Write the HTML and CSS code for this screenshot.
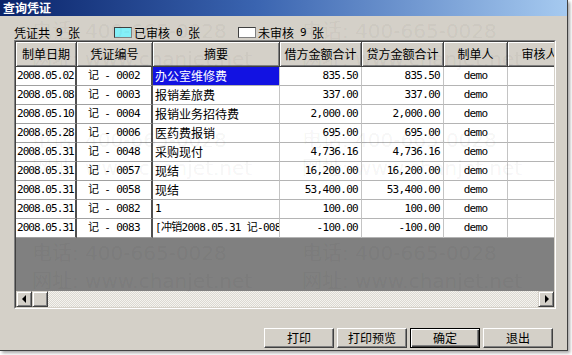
FILE: index.html
```html
<!DOCTYPE html>
<html lang="zh">
<head>
<meta charset="utf-8">
<title>查询凭证</title>
<link rel="stylesheet" href="styles.css">
</head>
<body>
<div class="win">
  <div class="titlebar">查询凭证</div>
  <div class="content">
    <div class="info">
      <span class="count">凭证共<span class="n">9</span>张</span>
      <span class="legend"><i class="sw sw-cyan"></i>已审核<span class="n">0</span>张</span>
      <span class="legend"><i class="sw sw-white"></i>未审核<span class="n">9</span>张</span>
    </div>
    <div class="grid">
      <div class="grid-in">
        <div class="row hrow">
          <div class="hc">制单日期</div>
          <div class="hc">凭证编号</div>
          <div class="hc">摘要</div>
          <div class="hc">借方金额合计</div>
          <div class="hc">贷方金额合计</div>
          <div class="hc">制单人</div>
          <div class="hc">审核人</div>
        </div>
        <div class="row drow">
          <div class="c fix mono date">2008.05.02</div><div class="c fix mono ctr">记 - 0002</div><div class="c txt sel">办公室维修费</div><div class="c mono num">835.50</div><div class="c mono num">835.50</div><div class="c mono ctr">demo</div><div class="c"></div>
        </div>
        <div class="row drow">
          <div class="c fix mono date">2008.05.08</div><div class="c fix mono ctr">记 - 0003</div><div class="c txt">报销差旅费</div><div class="c mono num">337.00</div><div class="c mono num">337.00</div><div class="c mono ctr">demo</div><div class="c"></div>
        </div>
        <div class="row drow">
          <div class="c fix mono date">2008.05.10</div><div class="c fix mono ctr">记 - 0004</div><div class="c txt">报销业务招待费</div><div class="c mono num">2,000.00</div><div class="c mono num">2,000.00</div><div class="c mono ctr">demo</div><div class="c"></div>
        </div>
        <div class="row drow">
          <div class="c fix mono date">2008.05.28</div><div class="c fix mono ctr">记 - 0006</div><div class="c txt">医药费报销</div><div class="c mono num">695.00</div><div class="c mono num">695.00</div><div class="c mono ctr">demo</div><div class="c"></div>
        </div>
        <div class="row drow">
          <div class="c fix mono date">2008.05.31</div><div class="c fix mono ctr">记 - 0048</div><div class="c txt">采购现付</div><div class="c mono num">4,736.16</div><div class="c mono num">4,736.16</div><div class="c mono ctr">demo</div><div class="c"></div>
        </div>
        <div class="row drow">
          <div class="c fix mono date">2008.05.31</div><div class="c fix mono ctr">记 - 0057</div><div class="c txt">现结</div><div class="c mono num">16,200.00</div><div class="c mono num">16,200.00</div><div class="c mono ctr">demo</div><div class="c"></div>
        </div>
        <div class="row drow">
          <div class="c fix mono date">2008.05.31</div><div class="c fix mono ctr">记 - 0058</div><div class="c txt">现结</div><div class="c mono num">53,400.00</div><div class="c mono num">53,400.00</div><div class="c mono ctr">demo</div><div class="c"></div>
        </div>
        <div class="row drow">
          <div class="c fix mono date">2008.05.31</div><div class="c fix mono ctr">记 - 0082</div><div class="c txt mono">1</div><div class="c mono num">100.00</div><div class="c mono num">100.00</div><div class="c mono ctr">demo</div><div class="c"></div>
        </div>
        <div class="row drow">
          <div class="c fix mono date">2008.05.31</div><div class="c fix mono ctr">记 - 0083</div><div class="c txt mono">[冲销2008.05.31 记-0083]</div><div class="c mono num">-100.00</div><div class="c mono num">-100.00</div><div class="c mono ctr">demo</div><div class="c"></div>
        </div>
        <div class="empty"></div>
        <div class="hscroll">
          <div class="sbtn"><i class="arr arr-l"></i></div>
          <div class="thumb"></div>
          <div class="track"></div>
          <div class="sbtn"><i class="arr arr-r"></i></div>
        </div>
      </div>
    </div>
    <div class="buttons">
      <div class="btn">打印</div>
      <div class="btn">打印预览</div>
      <div class="btn btn-default">确定</div>
      <div class="btn">退出</div>
    </div>
  </div>
  <div class="watermark">
    <div class="wm wm-1"><div>电话: 400-665-0028</div><div>网址: www.chanjet.net</div></div>
    <div class="wm wm-2"><div>电话: 400-665-0028</div><div>网址: www.chanjet.net</div></div>
    <div class="wm wm-3"><div>电话: 400-665-0028</div><div>网址: www.chanjet.net</div></div>
    <div class="wm wm-4"><div>电话: 400-665-0028</div><div>网址: www.chanjet.net</div></div>
    <div class="wm wm-5"><div>电话: 400-665-0028</div><div>网址: www.chanjet.net</div></div>
    <div class="wm wm-6"><div>电话: 400-665-0028</div><div>网址: www.chanjet.net</div></div>
  </div>
</div>
</body>
</html>
```

FILE: styles.css
```css
* { box-sizing: border-box; }
html, body { margin: 0; padding: 0; }
body {
  width: 572px;
  height: 355px;
  background: #fff;
  overflow: hidden;
  font-family: "Noto Sans CJK SC", "DejaVu Sans", sans-serif;
  font-size: 12px;
  color: #000;
}
.win {
  position: relative;
  width: 568px;
  height: 351px;
  background: #d4d0c8;
  border-right: 1px solid #404040;
  border-bottom: 1px solid #404040;
  box-shadow: 2px 2px 3px rgba(0,0,0,0.35);
  overflow: hidden;
}
.titlebar {
  height: 16px;
  line-height: 16px;
  padding-left: 3px;
  background: linear-gradient(to right, #0a246a 0%, #3a64b0 45%, #a6caf0 100%);
  color: #fff;
  font-weight: bold;
}
.content {
  padding: 9px 11px 0 14px;
}
.info {
  height: 15px;
  line-height: 15px;
  display: flex;
  align-items: center;
  white-space: nowrap;
}
.count, .legend { display: flex; align-items: center; }
.n {
  display: inline-block;
  width: 6px;
  margin: 0 6px;
  text-align: center;
  font-family: "DejaVu Sans Mono", monospace;
  font-size: 11px;
}
.legend { margin-left: 34px; }
.legend + .legend { margin-left: 38px; }
.sw {
  display: inline-block;
  width: 18px;
  height: 11px;
  margin-right: 2px;
  border: 1px solid;
  border-color: #404040 #808080 #808080 #404040;
}
.sw-cyan { background: #84f0f8; }
.sw-white { background: #fff; }

.grid {
  height: 269px;
  border: 1px solid;
  border-color: #808080 #fff #fff #808080;
}
.grid-in {
  height: 267px;
  border: 1px solid;
  border-color: #404040 #d4d0c8 #d4d0c8 #404040;
  display: flex;
  flex-direction: column;
  overflow: hidden;
  background: #808080;
}
.row {
  display: grid;
  grid-template-columns: 61px 76px 127px 82px 82px 64px 64px;
  width: 556px;
  flex: none;
}
.hrow { height: 25px; }
.hc {
  background: #d4d0c8;
  border-right: 1px solid #404040;
  border-bottom: 1px solid #404040;
  box-shadow: inset 1px 1px 0 #fff, inset -1px -1px 0 #808080;
  text-align: center;
  line-height: 23px;
  white-space: nowrap;
  overflow: hidden;
}
.drow { height: 19px; }
.c {
  background: #fff;
  border-right: 1px solid #c4c4c4;
  border-bottom: 1px solid #b4b4b4;
  line-height: 18px;
  white-space: nowrap;
  overflow: hidden;
  padding: 0 2px;
}
.c.fix { border-right: 2px solid #505050; border-bottom-color: #a0a0a0; }
.mono {
  font-family: "DejaVu Sans Mono", "Noto Sans CJK SC", monospace;
  font-size: 11px;
  letter-spacing: -0.7px;
}
.date { padding-left: 1px; padding-right: 0; letter-spacing: -0.95px; }
.ctr { text-align: center; }
.num { text-align: right; padding-right: 3px; }
.txt { padding-left: 2px; text-overflow: clip; }
.sel { background: #1212e2; color: #fff; }

.empty { flex: 1; background: #808080; }
.hscroll {
  height: 16px;
  flex: none;
  display: flex;
  background: #d4d0c8;
}
.sbtn, .thumb {
  width: 16px;
  height: 16px;
  flex: none;
  background: #d4d0c8;
  border: 1px solid;
  border-color: #d4d0c8 #404040 #404040 #d4d0c8;
  box-shadow: inset 1px 1px 0 #fff, inset -1px -1px 0 #808080;
  display: flex;
  align-items: center;
  justify-content: center;
}
.track {
  flex: 1;
  background-color: #e6e3dc;
  background-image: repeating-conic-gradient(#f4f3ef 0 25%, #dcd9d2 0 50%);
  background-size: 2px 2px;
}
.arr {
  display: block;
  width: 0;
  height: 0;
  border-top: 4px solid transparent;
  border-bottom: 4px solid transparent;
}
.arr-l { border-right: 4px solid #000; margin-right: 1px; }
.arr-r { border-left: 4px solid #000; margin-left: 1px; }

.buttons {
  margin-top: 19px;
  display: flex;
  justify-content: flex-end;
  gap: 3px;
  padding-right: 3px;
}
.btn {
  width: 70px;
  height: 20px;
  line-height: 18px;
  text-align: center;
  background: #d4d0c8;
  border: 1px solid;
  border-color: #fff #404040 #404040 #fff;
  box-shadow: inset -1px -1px 0 #808080;
}
.btn-default {
  border-color: #000;
  box-shadow: inset 1px 1px 0 #fff, inset -1px -1px 0 #404040, inset -2px -2px 0 #808080;
}

.watermark {
  position: absolute;
  inset: 0;
  pointer-events: none;
}
.wm {
  position: absolute;
  font-family: "DejaVu Sans", "Noto Sans CJK SC", sans-serif;
  font-size: 20px;
  line-height: 28px;
  color: rgba(0,0,0,0.055);
  white-space: nowrap;
}
.wm-1 { left: 32px; top: 17px; }
.wm-2 { left: 302px; top: 17px; }
.wm-3 { left: 32px; top: 126px; }
.wm-4 { left: 302px; top: 126px; }
.wm-5 { left: 32px; top: 239px; }
.wm-6 { left: 302px; top: 239px; }
```
